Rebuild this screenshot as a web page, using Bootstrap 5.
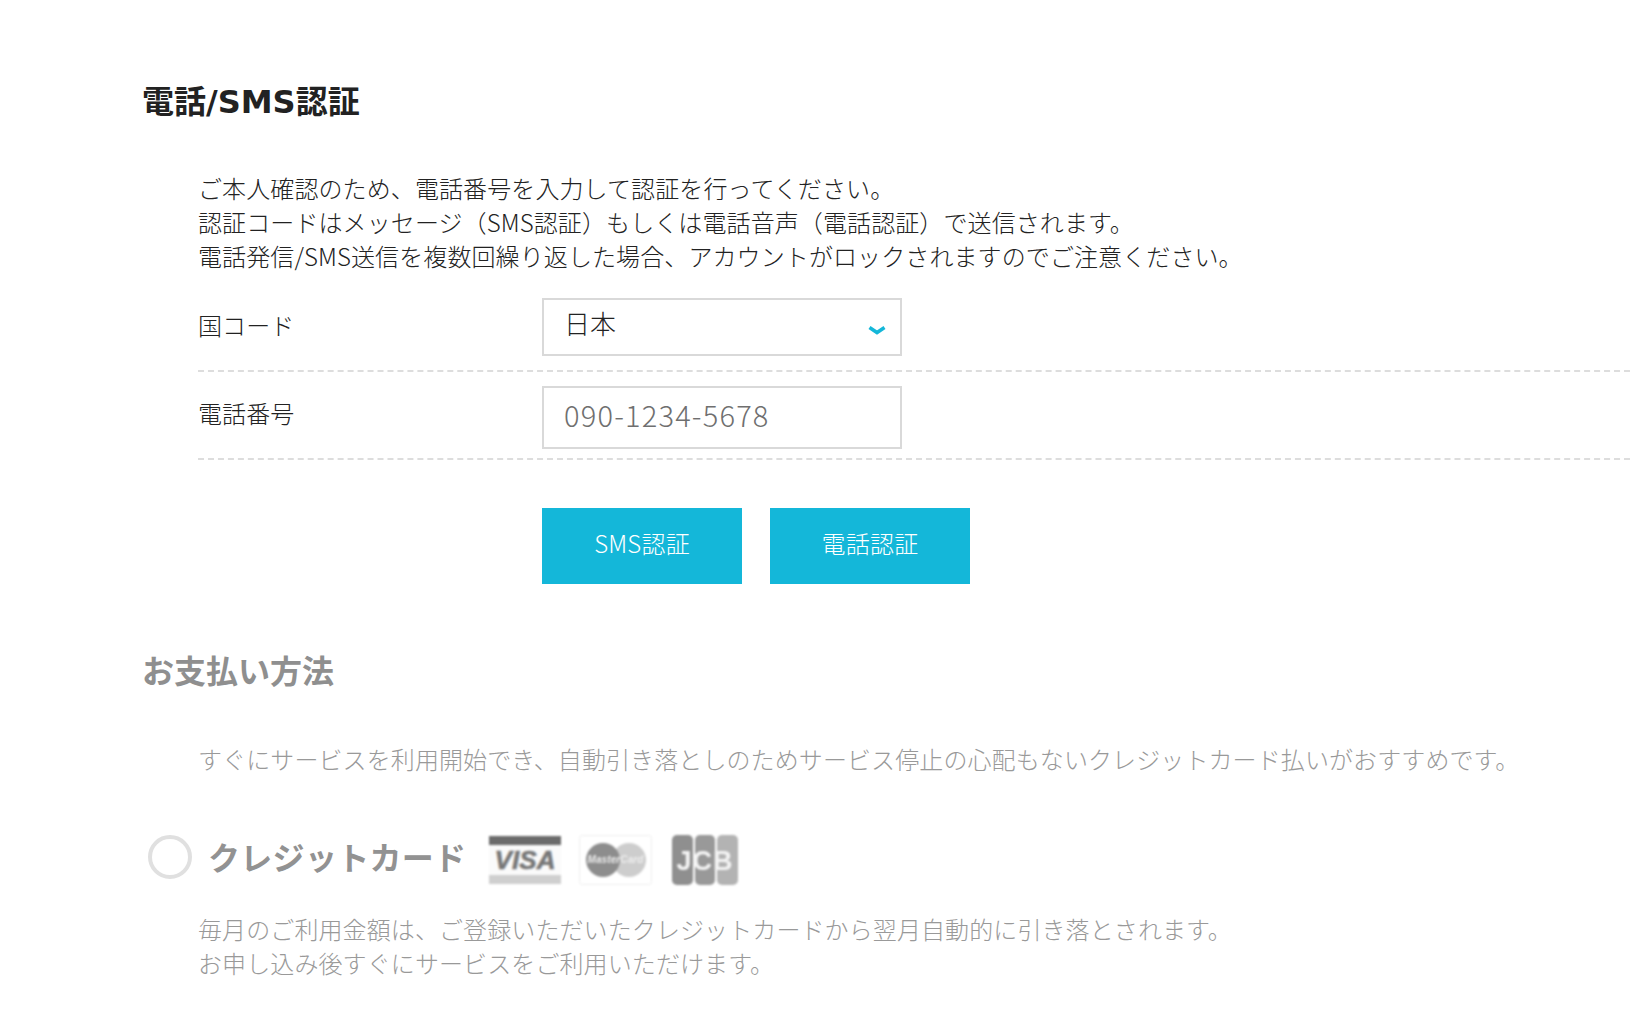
<!DOCTYPE html>
<html lang="ja">
<head>
<meta charset="utf-8">
<title>電話/SMS認証</title>
<link rel="stylesheet" href="https://cdn.jsdelivr.net/npm/bootstrap@5.3.0/dist/css/bootstrap.min.css">
<style>
html,body{height:1022px;overflow:hidden;background:#fff}
body{font-family:"Noto Sans CJK JP","Noto Sans",sans-serif;color:#222;font-size:24px;line-height:34px;letter-spacing:.1px;font-weight:300}
.pg{padding:80px 6px 0 142px}
.sec-title{font-family:"DejaVu Sans","Noto Sans CJK JP",sans-serif;font-size:32px;font-weight:700;line-height:44px;margin:0;color:#222;letter-spacing:0}
.sec-body{padding-left:56px}
.intro{margin:47px 0 25px}
.frow{display:flex;border-bottom:2px dashed #ddd}
.frow label{width:344px;flex:none;font-size:24px}
.r1{height:74px}
.r1 label{padding-top:10px}
.r2{height:88px;padding-top:14px}
.r2 label{padding-top:10px}
.fld{width:360px}
.fld .form-select,.fld .form-control{border-radius:0;border:2px solid #d9d9d9;box-shadow:none;color:#222;font-weight:300;padding:0 0 8px 20px}
.fld .form-select{height:58px;font-size:26px;line-height:36px;background-size:18px 9px;background-position:right 14px top 26px;
 background-image:url("data:image/svg+xml,%3Csvg xmlns='http://www.w3.org/2000/svg' viewBox='0 0 18 9'%3E%3Cpath d='M1.5 1.5 9 6.5l7.5-5' fill='none' stroke='%2314b7d9' stroke-width='3.6'/%3E%3C/svg%3E")}
.fld .form-control{height:63px;font-size:29px;letter-spacing:1.2px}
.fld .form-control::placeholder{color:#6f6f6f;opacity:1}
.btns{display:flex;gap:28px;padding:48px 0 0 344px}
.act{width:200px;height:76px;border-radius:0;border:0;background:#14b7d9;color:#fff;font-size:24px;font-weight:300;padding:0 0 6px;letter-spacing:.2px}
.act:hover{background:#14b7d9;color:#fff}
.muted-part{margin-top:66px;color:#999}
.muted-part .sec-title{color:#8f8f8f}
.lead-note{margin:48px 0 0;padding-left:56px;color:#999}
.pay-head{display:flex;align-items:center;margin-top:56px;padding-left:6px;height:50px}
.radio-ring{width:44px;height:44px;border:4px solid #e0e0e0;border-radius:50%;flex:none}
.pay-name{font-size:32px;font-weight:700;color:#929292;margin:-2px 0 0 16px;width:281px;flex:none;line-height:44px;letter-spacing:.3px}
.brands{display:flex;gap:18px;align-items:center;filter:blur(1px);margin-top:6px}
.brands svg{display:block;flex:none}
.brands svg:last-child{margin-left:2px}
.pay-note{margin:30px 0 0;padding-left:56px;color:#999}
</style>
</head>
<body>
<main class="pg">
 <section>
  <h2 class="sec-title">電話/SMS認証</h2>
  <div class="sec-body">
   <p class="intro">ご本人確認のため、電話番号を入力して認証を行ってください。<br>認証コードはメッセージ（SMS認証）もしくは電話音声（電話認証）で送信されます。<br>電話発信/SMS送信を複数回繰り返した場合、アカウントがロックされますのでご注意ください。</p>
   <div class="frow r1"><label for="cc">国コード</label><div class="fld"><select id="cc" class="form-select"><option>日本</option></select></div></div>
   <div class="frow r2"><label for="tel">電話番号</label><div class="fld"><input id="tel" class="form-control" type="text" placeholder="090-1234-5678"></div></div>
   <div class="btns"><button type="button" class="btn act">SMS認証</button><button type="button" class="btn act">電話認証</button></div>
  </div>
 </section>
 <section class="muted-part">
  <h2 class="sec-title">お支払い方法</h2>
  <p class="lead-note">すぐにサービスを利用開始でき、自動引き落としのためサービス停止の心配もないクレジットカード払いがおすすめです。</p>
  <div class="pay-head">
   <span class="radio-ring"></span>
   <h3 class="pay-name">クレジットカード</h3>
   <div class="brands">
    <svg width="72" height="48" viewBox="0 0 72 48" aria-label="VISA"><rect width="72" height="48" fill="#fafafa"/><rect width="72" height="9" fill="#6b6b6b"/><rect y="39" width="72" height="9" fill="#cfcfcf"/><text x="36" y="33" text-anchor="middle" font-family="Liberation Sans" font-weight="700" font-style="italic" font-size="26" fill="#777" stroke="#777" stroke-width=".6">VISA</text></svg>
    <svg width="73" height="50" viewBox="0 0 73 50" aria-label="MasterCard"><rect x=".5" y=".5" width="72" height="49" rx="2" fill="#fff" stroke="#eee"/><circle cx="50" cy="25" r="17" fill="#cdcdcd"/><circle cx="24" cy="25" r="17" fill="#8d8d8d"/><text x="36.5" y="28" text-anchor="middle" font-family="Liberation Sans" font-weight="700" font-style="italic" font-size="10" fill="#eee">MasterCard</text></svg>
    <svg width="66" height="50" viewBox="0 0 66 50" aria-label="JCB"><rect x="0" width="21" height="50" rx="5" fill="#8f8f8f"/><rect x="23" width="20" height="50" rx="5" fill="#999"/><rect x="45" width="21" height="50" rx="5" fill="#b3b3b3"/><text x="33" y="35" text-anchor="middle" font-family="Liberation Sans" font-weight="700" font-size="27" letter-spacing="1" fill="#f4f4f4">JCB</text></svg>
   </div>
  </div>
  <p class="pay-note">毎月のご利用金額は、ご登録いただいたクレジットカードから翌月自動的に引き落とされます。<br>お申し込み後すぐにサービスをご利用いただけます。</p>
 </section>
</main>
<script src="https://cdn.jsdelivr.net/npm/bootstrap@5.3.0/dist/js/bootstrap.bundle.min.js"></script>
</body>
</html>
